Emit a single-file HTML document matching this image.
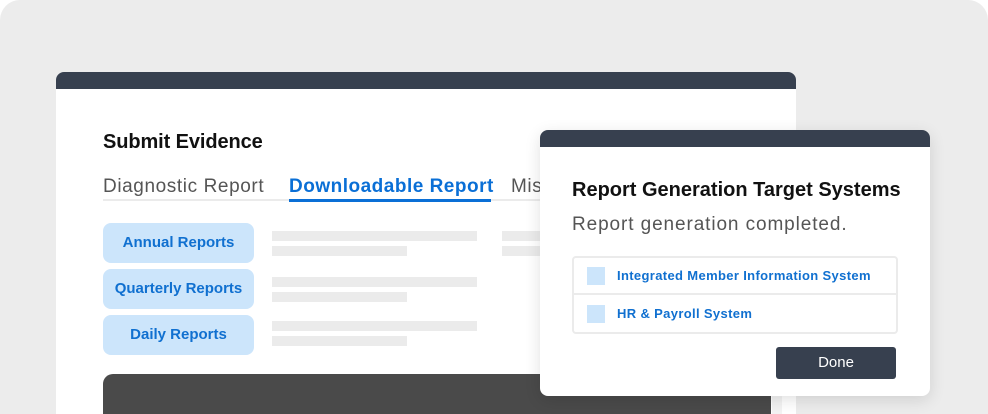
<!DOCTYPE html>
<html style="width:988px;height:414px;overflow:hidden"><head><style>
*{margin:0;padding:0;box-sizing:border-box}
body{width:988px;height:414px;background:#fff;font-family:"Liberation Sans",sans-serif;position:relative;overflow:hidden}
.bg{position:absolute;left:0;top:0;width:988px;height:414px;background:#ececec;border-radius:20px 20px 0 0}
.card{position:absolute;left:56px;top:72px;width:740px;height:342px;background:#fff;border-radius:8px 8px 0 0;overflow:hidden}
.card .hd{height:17px;background:#37404f}
.abs{position:absolute}
.title{left:47px;top:59px;font-size:20px;font-weight:bold;color:#111;letter-spacing:-0.1px}
.tab{top:104px;font-size:19px;color:#555;letter-spacing:0.6px}
.btn{left:47px;width:151px;height:40px;background:#cce5fb;border-radius:8px;color:#1070d0;font-size:15px;font-weight:bold;text-align:center;line-height:40px}
.sk{background:#ebebeb;height:10px}
.dlg{position:absolute;left:540px;top:130px;width:390px;height:266px;background:#fff;border-radius:8px;overflow:hidden;box-shadow:0 4px 16px rgba(0,0,0,.12)}
.dlg .hd{height:17px;background:#37404f}
.list{left:32px;top:126px;width:326px;height:78px;border:2px solid #ebebeb;border-radius:4px}
.row{height:37px;display:flex;align-items:center;padding-left:13px;color:#1070d0;font-size:13px;font-weight:bold;letter-spacing:0.35px}
.row i{display:inline-block;width:18px;height:18px;background:#cce5fb;margin-right:12px}
</style></head><body>
<div class="bg"></div>
<div class="card">
 <div class="hd"></div>
 <div class="abs title">Submit Evidence</div>
 <div class="abs" style="left:47px;top:127px;width:460px;height:2px;background:#ebebeb"></div>
 <div class="abs tab" style="left:47px">Diagnostic Report</div>
 <div class="abs tab" style="left:233px;color:#0a6fd6;font-weight:bold;letter-spacing:0.5px">Downloadable Report</div>
 <div class="abs" style="left:233px;top:127px;width:202px;height:3px;background:#0a6fd6"></div>
 <div class="abs tab" style="left:455px">Mis</div>
 <div class="abs btn" style="top:151px">Annual Reports</div>
 <div class="abs btn" style="top:197px">Quarterly Reports</div>
 <div class="abs btn" style="top:243px">Daily Reports</div>
 <div class="abs sk" style="left:216px;top:159px;width:205px"></div>
 <div class="abs sk" style="left:216px;top:174px;width:135px"></div>
 <div class="abs sk" style="left:446px;top:159px;width:60px"></div>
 <div class="abs sk" style="left:446px;top:174px;width:60px"></div>
 <div class="abs sk" style="left:216px;top:205px;width:205px"></div>
 <div class="abs sk" style="left:216px;top:220px;width:135px"></div>
 <div class="abs sk" style="left:216px;top:249px;width:205px"></div>
 <div class="abs sk" style="left:216px;top:264px;width:135px"></div>
 <div class="abs" style="left:47px;top:302px;width:668px;height:60px;background:#4a4a4a;border-radius:10px 10px 0 0"></div>
 <div class="abs" style="left:716px;top:302px;width:10px;height:60px;background:#f3f3f3"></div>
</div>
<div class="dlg">
 <div class="hd"></div>
 <div class="abs" style="left:32px;top:49px;font-size:20px;font-weight:bold;color:#111;letter-spacing:0px">Report Generation Target Systems</div>
 <div class="abs" style="left:32px;top:84px;font-size:19px;color:#555;letter-spacing:0.9px">Report generation completed.</div>
 <div class="abs list">
  <div class="row" style="border-bottom:2px solid #ebebeb"><i></i>Integrated Member Information System</div>
  <div class="row"><i></i>HR &amp; Payroll System</div>
 </div>
 <div class="abs" style="left:236px;top:217px;width:120px;height:32px;background:#37404f;border-radius:3px;color:#fff;font-size:15px;text-align:center;line-height:32px">Done</div>
</div>
</body></html>
